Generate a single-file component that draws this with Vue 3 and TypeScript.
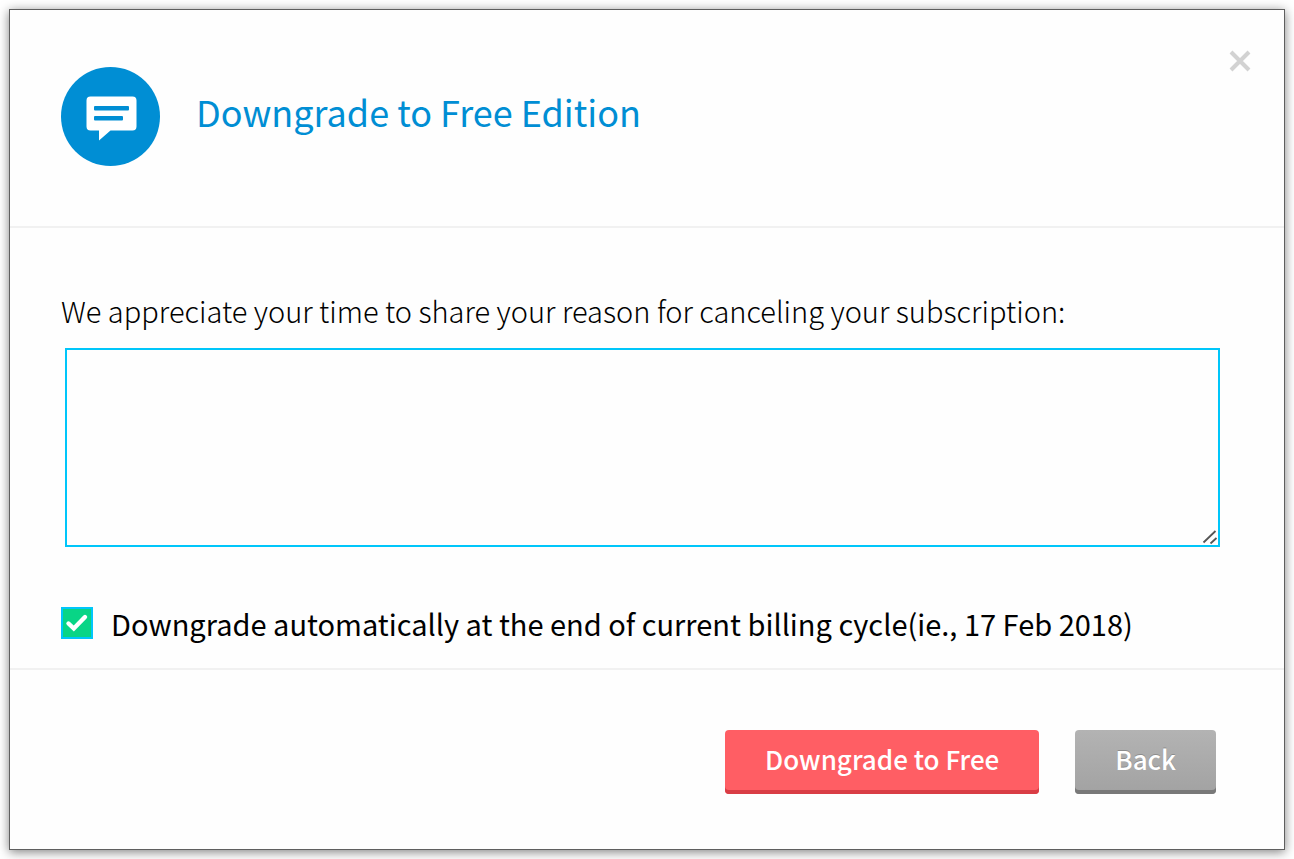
<script setup lang="ts">
import { ref } from 'vue'

const open = ref(true)
const reason = ref('')
const atCycleEnd = ref(true)

function close(): void {
  open.value = false
}
</script>

<template>
  <main v-if="open" class="page">
    <section class="dialog" role="dialog" aria-labelledby="dialog-title">
      <header class="head">
        <svg class="badge" viewBox="0 0 100 100" aria-hidden="true">
          <circle cx="49.500" cy="49.500" r="49.500" fill="#008ed4" />
          <path
            d="M29.500 29.500h42q4 0 4 4v26q0 4-4 4H49.500L38 73.500v-10h-8.500q-4 0-4-4V33.500q0-4 4-4z"
            fill="#fff"
          />
          <rect x="33" y="39" width="35" height="4.500" rx="1" fill="#008ed4" />
          <rect x="33" y="49" width="29" height="4.500" rx="1" fill="#008ed4" />
        </svg>
        <h1 id="dialog-title" class="title">Downgrade to Free Edition</h1>
        <button class="close" type="button" aria-label="Close" @click="close">
          <svg viewBox="0 0 22 22" aria-hidden="true">
            <path d="M2 2l18 18M20 2L2 20" fill="none" stroke="#d2d2d2" stroke-width="4" />
          </svg>
        </button>
      </header>

      <div class="body">
        <label class="prompt" for="reason">We appreciate your time to share your reason for canceling your subscription:</label>
        <div class="field">
          <textarea id="reason" v-model="reason" class="reason"></textarea>
          <svg class="grip" viewBox="0 0 16 16" aria-hidden="true">
            <path d="M1.500 13.500L13.500 2M8.500 14.500l6-5.500" fill="none" stroke="#555" stroke-width="1.800" />
          </svg>
        </div>
        <div class="option">
          <span class="tick">
            <input id="cycle" v-model="atCycleEnd" type="checkbox" />
            <svg v-if="atCycleEnd" viewBox="0 0 32 32" aria-hidden="true">
              <path d="M7.500 16.500l5.300 5L24 10" fill="none" stroke="#fff" stroke-width="4.400" stroke-linecap="round" />
            </svg>
          </span>
          <label for="cycle">Downgrade automatically at the end of current billing cycle(ie., 17 Feb 2018)</label>
        </div>
      </div>

      <footer class="foot">
        <button class="btn danger" type="button">Downgrade to Free</button>
        <button class="btn plain" type="button" @click="close">Back</button>
      </footer>
    </section>
  </main>
</template>

<style>
body {
  margin: 0;
  background: #fff;
}
</style>

<style scoped>
.page {
  box-sizing: border-box;
  padding: 9px;
  overflow: hidden;
  font-family: "Noto Sans CJK SC", "Noto Sans", sans-serif;
  color: #000;
}

.dialog {
  background: #fefefe;
  border: 1px solid #5f5f5f;
  box-shadow: 0 2px 10px rgba(0, 0, 0, 0.5);
}

.head {
  display: flex;
  align-items: flex-start;
  padding: 57px 33px 59px 51px;
  border-bottom: 2px solid #f1f1f1;
}

.badge {
  flex: none;
  width: 100px;
  height: 100px;
}

.title {
  flex: 1;
  margin: 18px 0 0 35px;
  font-size: 36px;
  line-height: 52px;
  font-weight: 400;
  color: #008ed4;
}

.close {
  flex: none;
  display: block;
  width: 22px;
  height: 22px;
  margin-top: -17px;
  padding: 0;
  border: 0;
  background: none;
  cursor: pointer;
}

.close svg {
  display: block;
  width: 22px;
  height: 22px;
}

.body {
  padding: 60px 64px 23px 51px;
  border-bottom: 2px solid #f1f1f1;
}

.prompt {
  display: block;
  font-size: 29px;
  line-height: 44px;
  font-weight: 300;
}

.field {
  position: relative;
  margin: 16px 0 0 4px;
}

.reason {
  display: block;
  box-sizing: border-box;
  width: 100%;
  height: 199px;
  padding: 12px;
  border: 2px solid #00c6fa;
  outline: none;
  background: #fefefe;
  resize: none;
  font: inherit;
  font-size: 29px;
}

.grip {
  position: absolute;
  right: 2px;
  bottom: 2px;
  width: 16px;
  height: 16px;
}

.option {
  display: flex;
  align-items: center;
  gap: 18px;
  margin-top: 54px;
  font-size: 29px;
  line-height: 44px;
}

.tick {
  position: relative;
  flex: none;
  width: 32px;
  height: 32px;
}

.tick input {
  appearance: none;
  display: block;
  box-sizing: border-box;
  width: 32px;
  height: 32px;
  margin: 0;
  border: 2px solid #00c6fa;
  background: #fff;
}

.tick input:checked {
  background: #08d586;
}

.tick svg {
  position: absolute;
  inset: 0;
  pointer-events: none;
}

.foot {
  display: flex;
  justify-content: flex-end;
  gap: 36px;
  padding: 60px 68px 55px;
}

.btn {
  box-sizing: border-box;
  height: 64px;
  padding: 0 40px 6px;
  border: 0;
  border-radius: 4px;
  font-family: inherit;
  font-size: 26px;
  line-height: 40px;
  font-weight: 500;
  color: #fff;
  cursor: pointer;
}

.danger {
  background: #ff5e64;
  box-shadow: inset 0 -4px #d93d45;
}

.plain {
  background: linear-gradient(#b3b3b3, #a2a2a2);
  box-shadow: inset 0 -4px #797979;
  text-shadow: 0 -1px #8c8c8c;
}
</style>
